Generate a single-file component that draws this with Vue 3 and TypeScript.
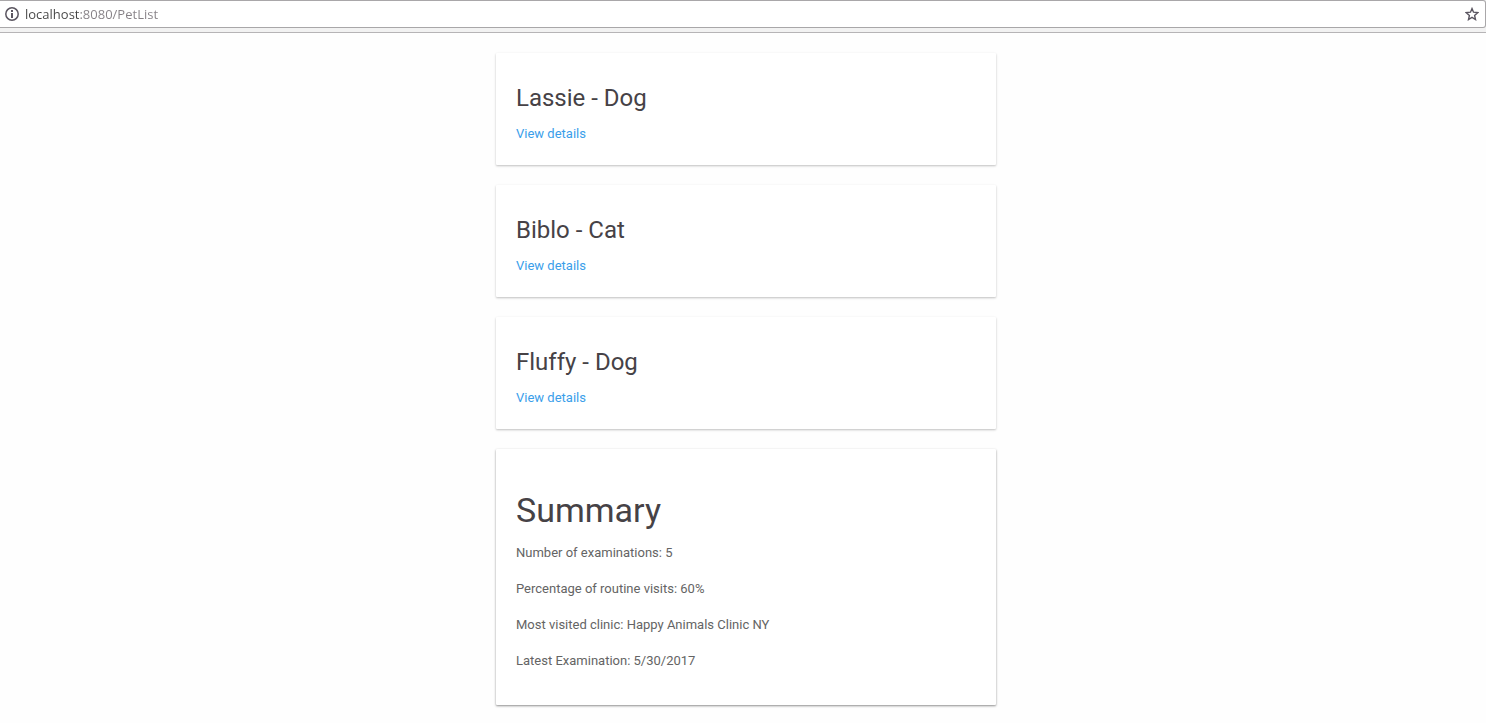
<script setup lang="ts">
import { ref } from 'vue'

interface Pet {
  name: string
  kind: string
}

const address = ref('localhost:8080/PetList')

const pets: Pet[] = [
  { name: 'Lassie', kind: 'Dog' },
  { name: 'Biblo', kind: 'Cat' },
  { name: 'Fluffy', kind: 'Dog' },
]

const summary: string[] = [
  'Number of examinations: 5',
  'Percentage of routine visits: 60%',
  'Most visited clinic: Happy Animals Clinic NY',
  'Latest Examination: 5/30/2017',
]
</script>

<template>
  <div class="page">
    <header class="toolbar">
      <div class="omnibox">
        <button class="icon-button" type="button" aria-label="View site information">
          <svg width="14" height="14" viewBox="0 0 14 14">
            <circle cx="7" cy="7" r="6.2" fill="none" stroke="#5a5560" stroke-width="1.5" />
            <path d="M6 3h2v2H6zM6 6h2v5H6z" fill="#5a5560" />
          </svg>
        </button>
        <input v-model="address" class="address" type="text" aria-label="Address" spellcheck="false" />
        <button class="icon-button" type="button" aria-label="Bookmark this page">
          <svg width="14" height="14" viewBox="0 0 14 14">
            <path
              d="M7 1.6 8.5 5.2l4.3.4-3.2 2.8.9 4.1L7 10.4l-3.5 2.1.9-4.1-3.2-2.8 4.3-.4z"
              fill="none"
              stroke="#5a5560"
              stroke-width="1.4"
            />
          </svg>
        </button>
      </div>
    </header>

    <main class="content">
      <section v-for="pet in pets" :key="pet.name" class="card">
        <h2 class="pet-title">{{ pet.name }} - {{ pet.kind }}</h2>
        <a class="details" href="#">View details</a>
      </section>

      <section class="card summary">
        <h1 class="summary-title">Summary</h1>
        <p v-for="line in summary" :key="line" class="fact">{{ line }}</p>
      </section>
    </main>
  </div>
</template>

<style>
body {
  background: #fefefe;
}
</style>

<style scoped>
.page {
  font-family: Roboto, 'Liberation Sans', sans-serif;
  font-size: 13px;
  line-height: 24px;
  color: #646464;
}

.toolbar {
  padding-bottom: 4px;
  background: #f2f2f2;
  border-bottom: 1px solid #b6b4b6;
}

.omnibox {
  display: flex;
  align-items: center;
  box-sizing: border-box;
  height: 28px;
  padding: 0 6px 0 5px;
  background: #fff;
  border: 1px solid #a9a7a9;
  border-left: 0;
  border-radius: 0 3px 3px 0;
}

.icon-button {
  display: flex;
  padding: 0;
  border: 0;
  background: none;
}

.address {
  flex: 1;
  min-width: 0;
  margin: 0 6px;
  padding: 0;
  border: 0;
  outline: 0;
  font-family: 'Open Sans', 'Noto Sans', sans-serif;
  font-size: 13px;
  line-height: 20px;
  color: transparent;
  caret-color: #444;
  /* The host is dark, the port and path after it are grey. */
  background: linear-gradient(to right, #444 54px, #858085 54px);
  background-clip: text;
  -webkit-background-clip: text;
}

.content {
  display: flex;
  flex-direction: column;
  gap: 20px;
  box-sizing: border-box;
  max-width: 506px;
  margin: 0 auto;
  padding: 20px 0 18px 6px;
}

.card {
  padding: 21px 20px 19px;
  background: #fff;
  border-radius: 1px;
  box-shadow: 0 1px 3px rgba(0, 0, 0, 0.12), 0 1px 2px rgba(0, 0, 0, 0.14);
}

.pet-title,
.summary-title {
  margin: 0;
  font-weight: 400;
  line-height: 48px;
  color: #464246;
}

.pet-title {
  font-size: 24px;
}

.details {
  display: block;
  width: fit-content;
  color: #3a9eea;
  text-decoration: none;
}

.summary {
  padding: 20px;
  box-shadow: 0 1px 3px rgba(0, 0, 0, 0.2), 0 1px 2px rgba(0, 0, 0, 0.28);
}

.summary-title {
  padding: 17px 0 7px;
  font-size: 34px;
}

.fact {
  margin: 0 0 12px;
}
</style>
